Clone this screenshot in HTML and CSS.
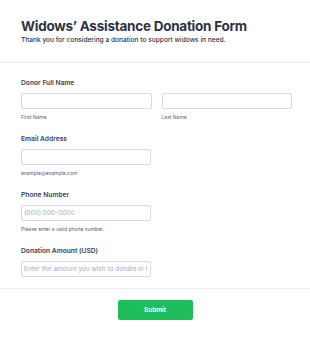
FILE: index.html
```html
<!DOCTYPE html>
<html>
<head>
<meta charset="utf-8">
<link rel="stylesheet" href="styles.css">
</head>
<body>
<div class="form">
  <header class="form-header">
    <h1 class="title">Widows’ Assistance Donation Form</h1>
    <p class="subtitle">Thank you for considering a donation to support widows in need.</p>
  </header>
  <section class="fields">
    <div class="field">
      <label class="label">Donor Full Name</label>
      <div class="name-row">
        <div class="name-col">
          <input class="input" type="text">
          <span class="sublabel">First Name</span>
        </div>
        <div class="name-col">
          <input class="input" type="text">
          <span class="sublabel">Last Name</span>
        </div>
      </div>
    </div>
    <div class="field">
      <label class="label">Email Address</label>
      <input class="input input-half" type="text">
      <span class="sublabel">example@example.com</span>
    </div>
    <div class="field">
      <label class="label">Phone Number</label>
      <input class="input input-half" type="text" placeholder="(000) 000-0000">
      <span class="sublabel">Please enter a valid phone number.</span>
    </div>
    <div class="field field-last">
      <label class="label">Donation Amount (USD)</label>
      <input class="input input-half" type="text" placeholder="Enter the amount you wish to donate in USD">
    </div>
  </section>
  <div class="actions">
    <button class="submit" type="button">Submit</button>
  </div>
</div>
</body>
</html>
```
FILE: styles.css
```css
html, body {
  margin: 0;
  padding: 0;
  background: #ffffff;
}
body {
  font-family: Inter, "Noto Sans", sans-serif;
  color: #2c3345;
  width: 310px;
}
.form-header {
  box-sizing: border-box;
  padding: 17.5px 21px 0 21px;
  height: 63px;
  border-bottom: 1px solid #eaebf2;
}
.title {
  margin: 0;
  font-size: 13.5px;
  line-height: 17px;
  font-weight: 700;
  letter-spacing: -0.25px;
  color: #2c3345;
}
.subtitle {
  margin: 1px 0 0 0;
  font-size: 6.6px;
  line-height: 9px;
  color: #2c3345;
  font-weight: 500;
}
.fields {
  padding: 15px 21px 11px 21px;
  border-bottom: 1px solid #eaebf2;
}
.field {
  display: flex;
  flex-direction: column;
  align-items: flex-start;
  margin-bottom: 13.5px;
}
.field-last {
  margin-bottom: 0;
}
.label {
  font-size: 6.7px;
  line-height: 10px;
  font-weight: 600;
  color: #3a4255;
  margin-bottom: 4.5px;
}
.name-row {
  display: flex;
  gap: 10px;
  width: 271px;
}
.name-col {
  flex: 1;
  display: flex;
  flex-direction: column;
}
.input {
  box-sizing: border-box;
  height: 16.5px;
  width: 100%;
  border: 1px solid #d8dbe3;
  border-radius: 2px;
  padding: 0 2px;
  font-family: Inter, "Noto Sans", sans-serif;
  font-size: 6.5px;
  color: #2c3345;
  outline: none;
  background: #fff;
}
.input-half {
  width: 130px;
}
.input::placeholder {
  color: #a6adbd;
}
.sublabel {
  font-size: 5px;
  line-height: 7px;
  color: #57647e;
  margin-top: 4.5px;
}
.actions {
  display: flex;
  justify-content: center;
  padding-top: 11px;
}
.submit {
  width: 75px;
  height: 20px;
  border: none;
  border-radius: 2px;
  background: #1fbe5c;
  color: #ffffff;
  font-family: Inter, "Noto Sans", sans-serif;
  font-size: 6.5px;
  font-weight: 600;
  padding: 0;
}
```
